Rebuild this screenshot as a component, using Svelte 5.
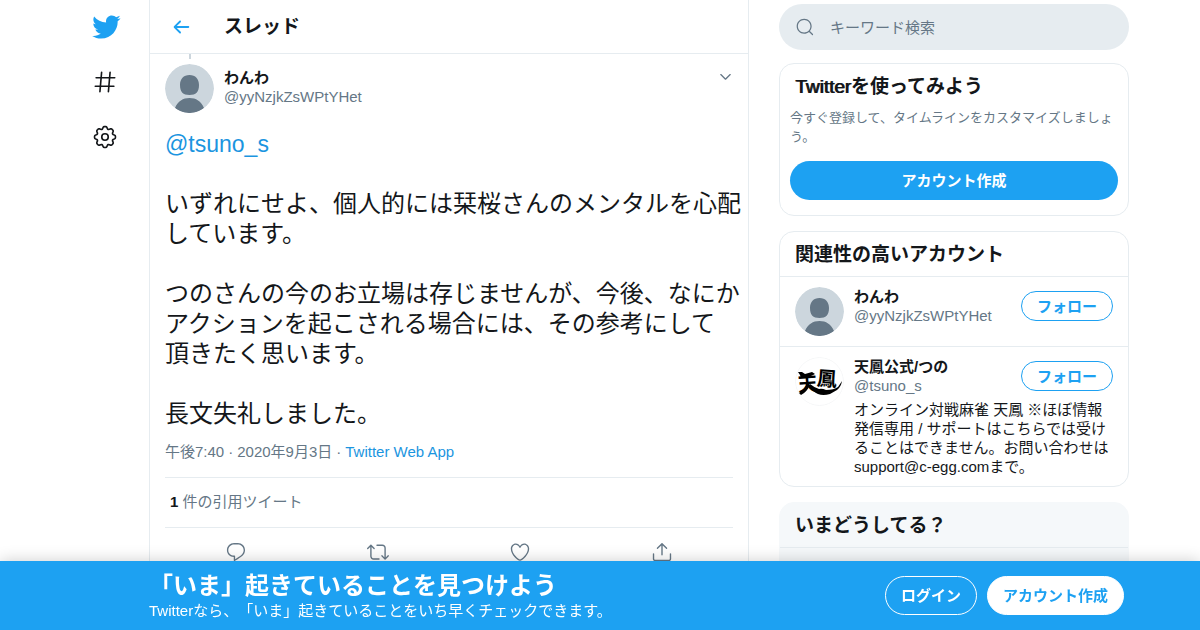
<script>
  const icons = {
    bird: 'M23.643 4.937c-.835.37-1.732.62-2.675.733.962-.576 1.7-1.49 2.048-2.578-.9.534-1.897.922-2.958 1.13-.85-.904-2.06-1.47-3.4-1.47-2.572 0-4.658 2.086-4.658 4.66 0 .364.042.718.12 1.06-3.873-.195-7.304-2.05-9.602-4.868-.4.69-.63 1.49-.63 2.342 0 1.616.823 3.043 2.072 3.878-.764-.025-1.482-.234-2.11-.583v.06c0 2.257 1.605 4.14 3.737 4.568-.392.106-.803.162-1.227.162-.3 0-.593-.028-.877-.082.593 1.85 2.313 3.198 4.352 3.234-1.595 1.25-3.604 1.995-5.786 1.995-.376 0-.747-.022-1.112-.065 2.062 1.323 4.51 2.093 7.14 2.093 8.57 0 13.255-7.098 13.255-13.254 0-.2-.005-.402-.014-.602.91-.658 1.7-1.477 2.323-2.41z',
    hash: 'M21 7.337h-3.93l.372-4.272c.036-.412-.27-.775-.682-.812-.417-.03-.776.27-.812.683l-.383 4.4h-6.32l.37-4.27c.037-.413-.27-.776-.68-.813-.42-.03-.777.27-.813.683l-.382 4.4H3.782c-.414 0-.75.337-.75.75s.336.75.75.75H7.61l-.55 6.327H3c-.414 0-.75.336-.75.75s.336.75.75.75h3.93l-.372 4.272c-.036.412.27.775.682.812l.066.003c.385 0 .712-.295.746-.686l.383-4.4h6.32l-.37 4.27c-.036.413.27.776.682.813l.066.003c.385 0 .712-.295.746-.686l.382-4.4h3.957c.413 0 .75-.337.75-.75s-.337-.75-.75-.75H16.39l.55-6.327H21c.414 0 .75-.336.75-.75s-.336-.75-.75-.75zm-6.115 7.826h-6.32l.55-6.326h6.32l-.55 6.326z',
    back: 'M20 11H7.414l4.293-4.293c.39-.39.39-1.023 0-1.414s-1.023-.39-1.414 0l-6 6c-.39.39-.39 1.023 0 1.414l6 6c.195.195.45.293.707.293s.512-.098.707-.293c.39-.39.39-1.023 0-1.414L7.414 13H20c.553 0 1-.447 1-1s-.447-1-1-1z',
    caret: 'M20.207 8.147c-.39-.39-1.023-.39-1.414 0L12 14.94 5.207 8.147c-.39-.39-1.023-.39-1.414 0-.39.39-.39 1.023 0 1.414l7.5 7.5c.195.196.45.294.707.294s.512-.098.707-.293l7.5-7.5c.39-.39.39-1.022 0-1.413z',
    search: 'M21.53 20.47l-3.66-3.66C19.195 15.24 20 13.214 20 11c0-4.97-4.03-9-9-9s-9 4.03-9 9 4.03 9 9 9c2.215 0 4.24-.804 5.808-2.13l3.66 3.66c.147.146.34.22.53.22s.385-.073.53-.22c.295-.293.295-.767.002-1.06zM3.5 11c0-4.135 3.365-7.5 7.5-7.5s7.5 3.365 7.5 7.5-3.365 7.5-7.5 7.5-7.5-3.365-7.5-7.5z'
  };

  const actions = [
    {
      label: '返信',
      path: 'M14.046 2.242l-4.148-.01h-.002c-4.374 0-7.8 3.427-7.8 7.802 0 4.098 3.186 7.206 7.465 7.37v3.828c0 .108.044.286.12.403.142.225.384.347.632.347.138 0 .277-.038.402-.118.264-.168 6.473-4.14 8.088-5.506 1.902-1.61 3.04-3.97 3.043-6.312v-.017c-.006-4.367-3.43-7.787-7.8-7.788zm3.787 12.972c-1.134.96-4.862 3.405-6.772 4.643V16.67c0-.414-.335-.75-.75-.75h-.396c-3.66 0-6.318-2.476-6.318-5.886 0-3.534 2.768-6.302 6.3-6.302l4.147.01h.002c3.532 0 6.3 2.766 6.302 6.296-.003 1.91-.942 3.844-2.514 5.176z'
    },
    {
      label: 'リツイート',
      path: 'M23.77 15.67c-.292-.293-.767-.293-1.06 0l-2.22 2.22V7.65c0-2.068-1.683-3.75-3.75-3.75h-5.85c-.414 0-.75.336-.75.75s.336.75.75.75h5.85c1.24 0 2.25 1.01 2.25 2.25v10.24l-2.22-2.22c-.293-.293-.768-.293-1.06 0s-.294.768 0 1.06l3.5 3.5c.145.147.337.22.53.22s.383-.072.53-.22l3.5-3.5c.294-.292.294-.767 0-1.06zm-10.66 3.28H7.26c-1.24 0-2.25-1.01-2.25-2.25V6.46l2.22 2.22c.148.147.34.22.532.22s.384-.073.53-.22c.293-.293.293-.768 0-1.06l-3.5-3.5c-.293-.294-.768-.294-1.06 0l-3.5 3.5c-.294.292-.294.767 0 1.06s.767.293 1.06 0l2.22-2.22V16.7c0 2.068 1.683 3.75 3.75 3.75h5.85c.414 0 .75-.336.75-.75s-.337-.75-.75-.75z'
    },
    {
      label: 'いいね',
      path: 'M12 21.638h-.014C9.403 21.59 1.95 14.856 1.95 8.478c0-3.064 2.525-5.754 5.403-5.754 2.29 0 3.83 1.58 4.646 2.73.814-1.148 2.354-2.73 4.645-2.73 2.88 0 5.404 2.69 5.404 5.755 0 6.376-7.454 13.11-10.037 13.157H12zM7.354 4.225c-2.08 0-3.903 1.988-3.903 4.255 0 5.74 7.034 11.596 8.55 11.658 1.518-.062 8.55-5.917 8.55-11.658 0-2.267-1.823-4.255-3.903-4.255-2.528 0-3.94 2.936-3.952 2.965-.23.562-1.156.562-1.387 0-.014-.03-1.425-2.965-3.954-2.965z'
    },
    {
      label: '共有',
      path: 'M17.53 7.47l-5-5c-.293-.293-.768-.293-1.06 0l-5 5c-.294.293-.294.768 0 1.06s.767.294 1.06 0l3.72-3.72V15c0 .414.336.75.75.75s.75-.336.75-.75V4.81l3.72 3.72c.146.147.338.22.53.22s.384-.072.53-.22c.293-.293.293-.767 0-1.06zM19.708 21.944H4.292C3.028 21.944 2 20.916 2 19.652V14c0-.414.336-.75.75-.75s.75.336.75.75v5.652c0 .437.355.792.792.792h15.416c.437 0 .792-.355.792-.792V14c0-.414.336-.75.75-.75s.75.336.75.75v5.652c0 1.264-1.028 2.292-2.292 2.292z'
    }
  ];

  const accounts = [
    { name: 'わんわ', handle: '@yyNzjkZsWPtYHet' },
    {
      name: '天鳳公式/つの',
      handle: '@tsuno_s',
      logo: true,
      bio: 'オンライン対戦麻雀 天鳳 ※ほぼ情報発信専用 / サポートはこちらでは受けることはできません。お問い合わせはsupport@c-egg.comまで。'
    }
  ];

  const tweet = `

いずれにせよ、個人的には栞桜さんのメンタルを心配
しています。

つのさんの今のお立場は存じませんが、今後、なにか
アクションを起こされる場合には、その参考にして
頂きたく思います。

長文失礼しました。`;

  // eight rounded teeth around the centre of a 24x24 box
  const gear =
    'M' +
    Array.from({ length: 96 }, (_, i) => {
      const t = (i / 96) * Math.PI * 2;
      const r = 8.5 + Math.tanh(1.5 * Math.cos(8 * t) + 0.5) * 1.2;
      return `${(12 + r * Math.sin(t)).toFixed(2)} ${(12 - r * Math.cos(t)).toFixed(2)}`;
    }).join('L') +
    'Z';
</script>

{#snippet icon(path)}
  <svg viewBox="0 0 24 24" aria-hidden="true"><path d={path} /></svg>
{/snippet}

{#snippet avatar(logo)}
  <svg class="avatar" viewBox="0 0 49 49" aria-hidden="true">
    {#if logo}
      <circle cx="24.5" cy="24.5" r="24" fill="#fff" stroke="#f5f6f7" />
      <text x="3" y="34" font-size="19" font-weight="700" transform="rotate(-4 12 26)">天</text>
      <text x="22" y="29" font-size="20" font-weight="700" transform="rotate(4 32 22)">鳳</text>
      <path d="M3 15l4 0 3 2 7-2 3 2-6 3-8 1-1-3zM4 36q5-3 8-9l3 1q-3 7-9 10zM15 27q5 4 9 5 3-1 7 1 8 0 12-3l4-6q-1 6-5 9l-7 4q-7 2-12 0-5-2-9-8z" />
    {:else}
      <circle cx="24.5" cy="24.5" r="24.5" fill="#ccd6dd" />
      <path
        d="M24.5 11c6 0 9.500 4 9.500 10 0 7-3 10-9.500 10S15 28 15 21c0-6 3.500-10 9.500-10zM10 44c3-7 8-10 14.500-10S36 37 39 44c-8 6.700-21 6.700-29 0z"
        fill="#657786"
      />
    {/if}
  </svg>
{/snippet}

<div class="page" lang="ja">
  <nav>
    <a class="logo" href="/" aria-label="Twitter">{@render icon(icons.bird)}</a>
    <a href="/explore" aria-label="話題を検索">{@render icon(icons.hash)}</a>
    <a href="/settings" aria-label="設定">
      <svg class="gear" viewBox="0 0 24 24" aria-hidden="true">
        <path d={gear} />
        <circle cx="12" cy="12" r="3" />
      </svg>
    </a>
  </nav>

  <main>
    <header>
      <button class="back" aria-label="戻る">{@render icon(icons.back)}</button>
      <h2>スレッド</h2>
    </header>

    <article>
      <div class="thread-line"></div>
      <div class="author">
        {@render avatar(false)}
        <div class="who">
          <a class="name" href="/yyNzjkZsWPtYHet">わんわ</a>
          <span class="handle">@yyNzjkZsWPtYHet</span>
        </div>
        <button class="more" aria-label="もっと見る">{@render icon(icons.caret)}</button>
      </div>

      <div class="tweet"><a href="/tsuno_s">@tsuno_s</a>{tweet}</div>

      <div class="meta">
        <span>午後7:40</span><span class="dot">·</span><span>2020年9月3日</span><span class="dot">·</span><a href="/source">Twitter Web App</a>
      </div>
      <div class="stats"><span class="count">1</span> 件の引用ツイート</div>
      <div class="actions">
        {#each actions as action}
          <button aria-label={action.label}>{@render icon(action.path)}</button>
        {/each}
      </div>
    </article>
  </main>

  <aside>
    <div class="search-wrap">
      <label class="search">
        {@render icon(icons.search)}
        <input type="text" placeholder="キーワード検索" aria-label="キーワード検索" />
      </label>
    </div>

    <section class="card signup">
      <h2><span class="latin">Twitter</span>を使ってみよう</h2>
      <p>今すぐ登録して、タイムラインをカスタマイズしましょう。</p>
      <button class="primary">アカウント作成</button>
    </section>

    <section class="card">
      <h2 class="card-title">関連性の高いアカウント</h2>
      {#each accounts as account}
        <div class="account">
          {@render avatar(account.logo)}
          <div class="account-body">
            <div class="account-top">
              <div class="who">
                <a class="name" href="/{account.handle.slice(1)}">{account.name}</a>
                <span class="handle">{account.handle}</span>
              </div>
              <button class="follow">フォロー</button>
            </div>
            {#if account.bio}
              <p class="bio">{account.bio}</p>
            {/if}
          </div>
        </div>
      {/each}
    </section>

    <section class="card trends">
      <h2 class="card-title">いまどうしてる？</h2>
    </section>
  </aside>
</div>

<div class="banner" lang="ja">
  <div class="banner-inner">
    <div class="banner-text">
      <div class="banner-title">「いま」起きていることを見つけよう</div>
      <div>Twitterなら、「いま」起きていることをいち早くチェックできます。</div>
    </div>
    <button class="login">ログイン</button>
    <button class="join">アカウント作成</button>
  </div>
</div>

<style>
  :global(body) {
    margin: 0;
    background: #fff;
    color: #14171a;
    font-family: 'Liberation Sans', 'Noto Sans CJK JP', sans-serif;
    font-size: 15px;
    line-height: 19px;
    text-spacing-trim: space-all;
  }

  h2,
  p {
    margin: 0;
  }

  h2 {
    font-size: 19px;
    line-height: 25px;
    font-weight: 700;
  }

  a {
    color: #1b95e0;
    text-decoration: none;
  }

  button {
    font: inherit;
    color: inherit;
    background: none;
    border: 0;
    padding: 0;
    cursor: pointer;
  }

  svg {
    display: block;
    fill: currentColor;
    flex: none;
  }

  .page {
    box-sizing: border-box;
    max-width: 1080px;
    height: 100vh;
    margin: 0 auto;
    padding-right: 11px;
    display: flex;
    overflow: hidden;
  }

  nav {
    flex: 0 0 89px;
    display: flex;
    flex-direction: column;
  }

  nav a {
    height: 55px;
    display: grid;
    place-items: center;
    color: #14171a;
  }

  nav svg {
    width: 26px;
    height: 26px;
  }

  nav .logo {
    height: 54px;
    padding-left: 2px;
    color: #1da1f2;
  }

  .logo :global(svg) {
    width: 30px;
    height: 30px;
  }

  .gear {
    fill: none;
    stroke: currentColor;
    stroke-width: 1.500;
  }

  main {
    flex: 1;
    min-width: 0;
    border: solid #e6ecf0;
    border-width: 0 1px;
  }

  header {
    box-sizing: border-box;
    height: 54px;
    padding: 0 20px;
    display: flex;
    align-items: center;
    gap: 32px;
    border-bottom: 1px solid #e6ecf0;
  }

  .back {
    color: #1da1f2;
  }

  .back :global(svg) {
    width: 22px;
    height: 22px;
  }

  article {
    padding: 0 15px;
  }

  .thread-line {
    width: 2px;
    height: 5px;
    margin: 0 0 5px 24px;
    background: #ccd6dd;
  }

  .author {
    display: flex;
    gap: 10px;
  }

  .avatar {
    width: 49px;
    height: 49px;
    border-radius: 50%;
    color: #000;
  }

  .who {
    flex: 1;
    display: flex;
    flex-direction: column;
  }

  .author .who {
    padding-top: 4px;
  }

  .name {
    color: #14171a;
    font-weight: 700;
  }

  .handle {
    color: #657786;
  }

  .more {
    align-self: flex-start;
    padding-top: 5px;
    color: #657786;
  }

  .more :global(svg) {
    width: 15px;
    height: 15px;
  }

  .tweet {
    margin: 16px -10px 0 0;
    font-size: 24px;
    line-height: 30px;
    white-space: pre-line;
  }

  .tweet a {
    font-size: 23px;
  }

  .meta {
    padding: 13px 0 16px;
    display: flex;
    color: #657786;
    border-bottom: 1px solid #e6ecf0;
  }

  .dot {
    padding: 0 4px;
  }

  .stats {
    padding: 14px 5px 16px;
    color: #657786;
    border-bottom: 1px solid #e6ecf0;
  }

  .count {
    color: #14171a;
    font-weight: 700;
  }

  .latin {
    font-weight: 400;
    text-shadow: 1px 0 currentColor;
  }

  .actions {
    display: flex;
    justify-content: space-around;
    padding: 13px 0;
    color: #657786;
  }

  .actions :global(svg) {
    width: 22px;
    height: 22px;
  }

  aside {
    flex: 0 0 350px;
    margin-left: 30px;
  }

  .search-wrap {
    padding: 4px 0 13px;
  }

  .search {
    height: 46px;
    padding: 0 16px;
    display: flex;
    align-items: center;
    gap: 15px;
    border-radius: 23px;
    background: #e6ecf0;
    color: #657786;
  }

  .search :global(svg) {
    width: 20px;
    height: 20px;
  }

  .search input {
    flex: 1;
    min-width: 0;
    padding: 0;
    border: 0;
    outline: 0;
    background: none;
    font: inherit;
    color: #14171a;
  }

  .search input::placeholder {
    color: #657786;
    opacity: 1;
  }

  .card {
    margin-bottom: 15px;
    border: 1px solid #e6ecf0;
    border-radius: 15px;
  }

  .signup {
    padding: 10px 10px 15px;
    display: flex;
    flex-direction: column;
  }

  .signup h2 {
    padding: 0 5px;
  }

  .signup p {
    margin: 9px 0 15px;
    font-size: 13px;
    color: #657786;
  }

  .primary {
    height: 39px;
    border-radius: 20px;
    background: #1da1f2;
    color: #fff;
    font-weight: 700;
  }

  .card-title {
    padding: 10px 15px 9px;
    border-bottom: 1px solid #e6ecf0;
  }

  .account {
    display: flex;
    gap: 10px;
    padding: 10px 15px;
  }

  .account + .account {
    border-top: 1px solid #e6ecf0;
  }

  .account-body {
    flex: 1;
    min-width: 0;
  }

  .account-top {
    display: flex;
    align-items: center;
  }

  .follow {
    box-sizing: border-box;
    height: 30px;
    padding: 0 15px;
    border: 1px solid #1da1f2;
    border-radius: 15px;
    color: #1da1f2;
    font-weight: 700;
  }

  .bio {
    margin-top: 5px;
  }

  .trends {
    height: 300px;
    background: #f5f8fa;
    border-color: #f5f8fa;
  }

  .banner {
    position: fixed;
    left: 0;
    right: 0;
    bottom: 0;
    background: #1da1f2;
    color: #fff;
    box-shadow: 0 0 15px rgba(0, 0, 0, 0.2);
  }

  .banner-inner {
    box-sizing: border-box;
    max-width: 1080px;
    margin: 0 auto;
    padding: 10px 16px 10px 89px;
    display: flex;
    align-items: center;
    gap: 10px;
  }

  .banner-text {
    flex: 1;
  }

  .banner-title {
    font-size: 24px;
    line-height: 30px;
    font-weight: 700;
  }

  .login,
  .join {
    box-sizing: border-box;
    height: 39px;
    padding: 0 15px;
    border: 1px solid #fff;
    border-radius: 20px;
    font-weight: 700;
  }

  .join {
    background: #fff;
    color: #1da1f2;
  }
</style>
